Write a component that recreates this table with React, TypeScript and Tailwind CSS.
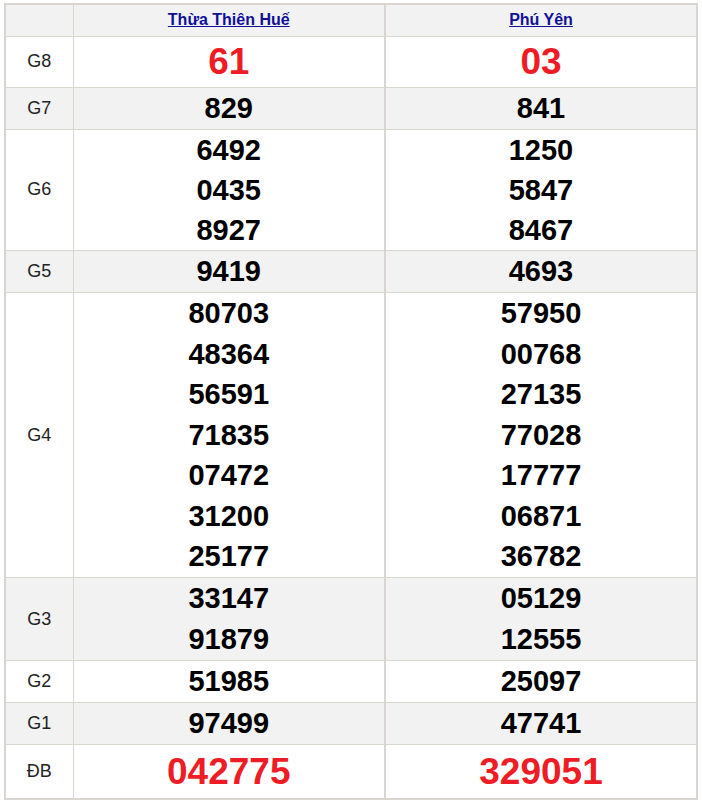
import { FC } from "react";

type Row = { label: string; hue: string[]; phu: string[]; big?: boolean; tight?: boolean };

const rows: Row[] = [
  { label: "G8", hue: ["61"], phu: ["03"], big: true },
  { label: "G7", hue: ["829"], phu: ["841"] },
  { label: "G6", hue: ["6492", "0435", "8927"], phu: ["1250", "5847", "8467"], tight: true },
  { label: "G5", hue: ["9419"], phu: ["4693"] },
  {
    label: "G4",
    hue: ["80703", "48364", "56591", "71835", "07472", "31200", "25177"],
    phu: ["57950", "00768", "27135", "77028", "17777", "06871", "36782"],
  },
  { label: "G3", hue: ["33147", "91879"], phu: ["05129", "12555"] },
  { label: "G2", hue: ["51985"], phu: ["25097"] },
  { label: "G1", hue: ["97499"], phu: ["47741"] },
  { label: "ĐB", hue: ["042775"], phu: ["329051"], big: true },
];

const Numbers: FC<{ items: string[]; big?: boolean; tight?: boolean; last?: boolean }> = ({ items, big, tight, last }) => (
  <td
    className={
      "border border-[#d9d5cf] text-center align-middle p-0 " +
      (last ? "border-l-2 " : "") +
      (big
        ? "text-[#ee1c25] text-[37px] leading-[50px]"
        : tight
          ? "text-black text-[29px] leading-[40.3px]"
          : "text-black text-[29px] leading-[40.5px] pb-[0.5px]")
    }
  >
    {items.map((n) => (
      <div key={n} className="font-bold">
        {n}
      </div>
    ))}
  </td>
);

const App: FC = () => {
  return (
    <div className="bg-white w-[702px] h-[801px] pt-[3px] pl-[4px]" style={{ fontFamily: '"Liberation Sans", Arial, sans-serif' }}>
      <table className="border-collapse border-2 border-[#d9d5cf] w-[692px] table-fixed">
        <colgroup>
          <col className="w-[68px]" />
          <col className="w-[312px]" />
          <col className="w-[312px]" />
        </colgroup>
        <thead>
          <tr className="bg-[#f2f2f2] h-[32px]">
            <th className="border border-[#d9d5cf] p-0"></th>
            <th className="border border-[#d9d5cf] p-0 text-[16px] font-bold">
              <a href="#" className="text-[#10109a] underline">
                Thừa Thiên Huế
              </a>
            </th>
            <th className="border border-[#d9d5cf] border-l-2 p-0 text-[16px] font-bold">
              <a href="#" className="text-[#10109a] underline">
                Phú Yên
              </a>
            </th>
          </tr>
        </thead>
        <tbody>
          {rows.map((r, i) => (
            <tr key={r.label} className={(i % 2 === 1 ? "bg-[#f2f2f2]" : "bg-white") + (r.label === "ĐB" ? " h-[55px]" : "")}>
              <td className="border border-[#d9d5cf] text-center align-middle p-0 text-[18px] text-[#222]">{r.label}</td>
              <Numbers items={r.hue} big={r.big} tight={r.tight} />
              <Numbers items={r.phu} big={r.big} tight={r.tight} last />
            </tr>
          ))}
        </tbody>
      </table>
    </div>
  );
};

export default App;
